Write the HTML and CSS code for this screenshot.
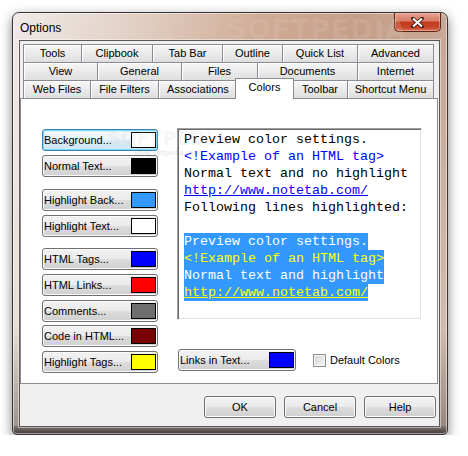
FILE: index.html
```html
<!DOCTYPE html>
<html lang="en">
<head>
    <meta charset="UTF-8">
    <title>Options</title>
    <link rel="stylesheet" href="styles.css">
</head>
<body>
    <div class="window">
        <div class="titlebar">
            <span class="title">Options</span>
            <span class="title-mark">SOFTPEDIA</span>
            <button class="close">
                <svg width="13" height="11" viewBox="0 0 13 11">
                    <path d="M2 1.5 L11 9.5 M11 1.5 L2 9.5" stroke="#3a1a14" stroke-width="3.6" stroke-linecap="square"/>
                    <path d="M2 1.5 L11 9.5 M11 1.5 L2 9.5" stroke="#fff" stroke-width="2"/>
                </svg>
            </button>
        </div>

        <div class="client">
            <div class="tabs">
                <div class="tab-row row1">
                    <div class="tab">Tools</div>
                    <div class="tab">Clipbook</div>
                    <div class="tab">Tab Bar</div>
                    <div class="tab">Outline</div>
                    <div class="tab">Quick List</div>
                    <div class="tab">Advanced</div>
                </div>
                <div class="tab-row row2">
                    <div class="tab">View</div>
                    <div class="tab">General</div>
                    <div class="tab">Files</div>
                    <div class="tab">Documents</div>
                    <div class="tab">Internet</div>
                </div>
                <div class="tab-row row3">
                    <div class="tab">Web Files</div>
                    <div class="tab">File Filters</div>
                    <div class="tab">Associations</div>
                    <div class="tab active">Colors</div>
                    <div class="tab">Toolbar</div>
                    <div class="tab">Shortcut Menu</div>
                </div>
            </div>

            <div class="panel">
                <div class="watermark">
                    <span class="wm-big">SOFTPEDIA</span>
                    <span class="wm-small">www.softpedia.com</span>
                </div>

                <div class="color-list">
                    <div class="group">
                        <button class="color-btn focused">Background...<span class="swatch sw-white"></span></button>
                        <button class="color-btn">Normal Text...<span class="swatch sw-black"></span></button>
                    </div>
                    <div class="group">
                        <button class="color-btn">Highlight Back...<span class="swatch sw-hilite"></span></button>
                        <button class="color-btn">Highlight Text...<span class="swatch sw-white"></span></button>
                    </div>
                    <div class="group">
                        <button class="color-btn">HTML Tags...<span class="swatch sw-blue"></span></button>
                        <button class="color-btn">HTML Links...<span class="swatch sw-red"></span></button>
                        <button class="color-btn">Comments...<span class="swatch sw-gray"></span></button>
                        <button class="color-btn">Code in HTML...<span class="swatch sw-maroon"></span></button>
                        <button class="color-btn">Highlight Tags...<span class="swatch sw-yellow"></span></button>
                    </div>
                </div>

                <div class="right-col">
                    <div class="preview">
                        <div class="line">Preview color settings.</div>
                        <div class="line tag">&lt;!Example of an HTML tag&gt;</div>
                        <div class="line">Normal text and no highlight</div>
                        <div class="line"><span class="link">http://www.notetab.com/</span></div>
                        <div class="line">Following lines highlighted:</div>
                        <div class="line blank"></div>
                        <div class="line hl">Preview color settings.</div>
                        <div class="line hl hl-tag">&lt;!Example of an HTML tag&gt;</div>
                        <div class="line hl">Normal text and highlight</div>
                        <div class="line hl hl-link">http://www.notetab.com/</div>
                    </div>

                    <div class="links-row">
                        <button class="color-btn wide">Links in Text...<span class="swatch sw-blue"></span></button>
                        <label class="check">
                            <span class="check-box"></span>
                            Default Colors
                        </label>
                    </div>
                </div>
            </div>

            <div class="actions">
                <button class="btn">OK</button>
                <button class="btn">Cancel</button>
                <button class="btn">Help</button>
            </div>
        </div>
    </div>
</body>
</html>
```

FILE: styles.css
```css
/* Page */
body {
    margin: 0;
    background: #fff;
    font-family: "Liberation Sans", Arial, sans-serif;
    font-size: 11px;
    color: #000;
}

/* Window frame (Aero look) */
.window {
    width: 436px;
    box-sizing: border-box;
    margin: 12px 0 0 12px;
    padding-bottom: 7px;
    border: 1px solid #3a3434;
    border-radius: 7px 7px 5px 5px;
    background:
        linear-gradient(to bottom, rgba(0, 0, 0, 0) calc(100% - 8px), #857874 calc(100% - 8px), #3f3735 100%),
        linear-gradient(to bottom, rgba(0, 0, 0, 0) 75%, rgba(90, 78, 74, 0.55) 100%),
        linear-gradient(100deg, #eeeae8 0%, #e2cfc3 25%, #d0ad98 48%, #c59e88 68%, #c9ab99 88%, #d6c5ba 100%);
    box-shadow: 0 4px 12px rgba(0, 0, 0, 0.5), inset 0 0 0 1px rgba(255, 255, 255, 0.5);
}

.titlebar {
    position: relative;
    height: 27px;
    display: flex;
    align-items: flex-start;
    justify-content: space-between;
}

.title {
    font-size: 12px;
    margin: 8px 0 0 7px;
}

.title-mark {
    position: absolute;
    left: 214px;
    top: 1px;
    font: bold 27px "DejaVu Sans", sans-serif;
    letter-spacing: 1px;
    color: rgba(225, 200, 188, 0.22);
}

.close {
    width: 47px;
    height: 19px;
    margin-right: 6px;
    padding: 0;
    border: 1px solid #5b2419;
    border-top: none;
    border-radius: 0 0 5px 5px;
    background: linear-gradient(#e8a493 0%, #d77a63 45%, #c0391c 50%, #c9462a 80%, #d9735a 100%);
    box-shadow: inset 0 0 0 1px rgba(255, 200, 185, 0.5);
    display: flex;
    align-items: center;
    justify-content: center;
}

/* Client area */
.client {
    margin: 0 7px 0 6px;
    padding: 3px 1px 8px 0;
    background: #f0f0f0;
    border: 1px solid #5c5654;
    box-shadow: 0 0 0 1px rgba(255, 255, 255, 0.45);
}

/* Tabs */
.tabs {
    padding-left: 3px;
}

.tab-row {
    display: grid;
    height: 18px;
}

.row1 { grid-template-columns: 58px 71px 70px 60px 75px 77px; }
.row2 { grid-template-columns: 74px 84px 76px 100px 77px; }
.row3 { grid-template-columns: 67px 68px 79px 55px 55px 87px; }

.tab {
    border-top: 1px solid #898c95;
    border-left: 1px solid #898c95;
    background: linear-gradient(#f7f7f7, #dedede);
    box-shadow: inset 1px 1px 0 #fff;
    text-align: center;
    line-height: 17px;
    white-space: nowrap;
}

.tab:last-child {
    border-right: 1px solid #898c95;
}

.tab.active {
    position: relative;
    z-index: 1;
    margin: -2px -2px -1px -2px;
    padding-bottom: 3px;
    border-right: 1px solid #898c95;
    background: #fff;
    box-shadow: none;
}

/* Tab page */
.panel {
    position: relative;
    display: flex;
    gap: 19px;
    padding: 30px 0 10px 21px;
    background: #fff;
    border: 1px solid #898c95;
}

.watermark {
    position: absolute;
    left: 86px;
    top: 28px;
    display: flex;
    flex-direction: column;
    align-items: center;
    color: rgba(200, 200, 200, 0.16);
    pointer-events: none;
    z-index: 2;
}

.wm-big {
    font: bold 19px "DejaVu Sans", sans-serif;
}

.wm-small {
    font-size: 7px;
    font-weight: bold;
    color: rgba(150, 150, 150, 0.22);
}

.color-list {
    display: flex;
    flex-direction: column;
    width: 116px;
}

.group {
    display: flex;
    flex-direction: column;
    gap: 4px;
}

.group + .group {
    margin-top: 12px;
}

.group:last-child {
    margin-top: 11px;
    gap: 3.75px;
}

/* Buttons */
.color-btn,
.btn {
    font: 11px "Liberation Sans", Arial, sans-serif;
    color: #000;
    height: 22px;
    box-sizing: border-box;
    border: 1px solid #707070;
    border-radius: 3px;
    background: linear-gradient(#f2f2f2 0%, #ebebeb 48%, #dddddd 52%, #cfcfcf 100%);
    box-shadow: inset 0 0 0 1px #fbfbfb;
}

.color-btn {
    display: flex;
    align-items: center;
    justify-content: space-between;
    width: 116px;
    padding: 0 1px 0 1px;
    text-align: left;
}

.color-btn.wide {
    width: 118px;
}

.color-btn.focused {
    border-color: #3c7fb1;
    background: linear-gradient(#f6fbfe 0%, #eaf4fa 48%, #dcecf6 52%, #d0e4f1 100%);
    box-shadow: inset 0 0 0 1px #7fdcfb, inset 0 0 0 2px rgba(200, 240, 255, 0.7);
}

.swatch {
    width: 25px;
    height: 16px;
    box-sizing: border-box;
    border: 1px solid #000;
}

.sw-white { background: #fff; }
.sw-black { background: #000; }
.sw-hilite { background: #3399ff; }
.sw-blue { background: #0000ff; }
.sw-red { background: #ff0000; }
.sw-gray { background: #6e6e6e; }
.sw-maroon { background: #780000; }
.sw-yellow { background: #ffff00; }

/* Preview box */
.right-col {
    display: flex;
    flex-direction: column;
}

.preview {
    width: 245px;
    height: 192px;
    margin-top: -1px;
    box-sizing: border-box;
    padding: 2px 0 0 6px;
    overflow: hidden;
    background: #fff;
    border: 1px solid;
    border-color: #a0a0a0 #fff #fff #a0a0a0;
    box-shadow: inset 1px 1px 0 #696969, inset -1px -1px 0 #e3e3e3;
    font: 13.33px/17px "Liberation Mono", "Courier New", monospace;
}

.line {
    white-space: pre;
    height: 17px;
}

.tag { color: #0000ff; }

.link {
    color: #0000ff;
    text-decoration: underline;
}

.hl {
    width: fit-content;
    background: #3399ff;
    color: #fff;
}

.hl-tag { color: #ffff00; }

.hl-link {
    color: #ffff00;
    text-decoration: underline;
}

.links-row {
    display: flex;
    align-items: center;
    margin-top: 29px;
    margin-left: 1px;
}

.check {
    display: flex;
    align-items: center;
    gap: 4px;
    margin-left: 17px;
}

.check-box {
    width: 13px;
    height: 13px;
    box-sizing: border-box;
    border: 1px solid #8e8f8f;
    background: linear-gradient(135deg, #cfd2d6, #f7f7f7);
    box-shadow: inset 0 0 0 1px #f4f4f4;
}

/* Dialog buttons */
.actions {
    display: flex;
    justify-content: flex-end;
    gap: 8px;
    margin-top: 12px;
    padding-right: 2px;
}

.btn {
    width: 72px;
    text-align: center;
}
```
